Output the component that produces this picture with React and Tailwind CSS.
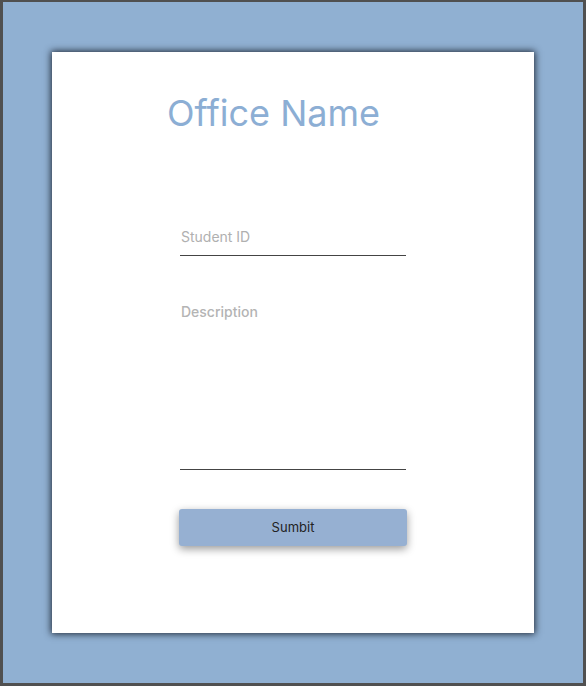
export default function App() {
  return (
    <main className="flex min-h-screen flex-col border-x-[3px] border-t-2 border-b-[3px] border-[#505050] bg-[#90b0d2] px-[49px] py-[50px] font-['Inter',sans-serif]">
      <form className="flex flex-1 flex-col bg-white px-[127px] pt-9 shadow-[0_0_7px_1px_#1f2937]" onSubmit={(e) => e.preventDefault()}>
        <h1 className="-ml-3 text-4xl leading-[50px] whitespace-nowrap text-[#8caed4]">Office Name</h1>
        <input
          type="text"
          aria-label="Student ID"
          placeholder="Student ID"
          className="mx-px mt-20 h-[38px] border-b border-[#444444] px-px text-sm outline-none placeholder:text-[#b0b0b0]"
        />
        <textarea
          aria-label="Description"
          placeholder="Description"
          className="mx-px mt-[46px] h-[168px] resize-none border-b border-[#444444] px-px text-sm font-medium outline-none placeholder:text-[#b4b4b4]"
        />
        <button type="submit" className="mt-[39px] h-[37px] rounded-[3px] bg-[#96b0d2] text-[13px] text-[#222222] shadow-[0_3px_8px_#00000066]">
          Sumbit
        </button>
      </form>
    </main>
  );
}
